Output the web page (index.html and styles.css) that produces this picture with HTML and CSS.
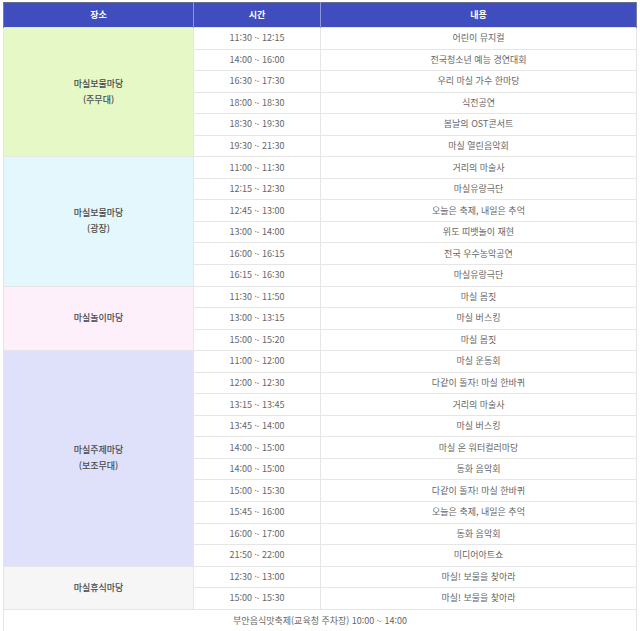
FILE: index.html
```html
<!DOCTYPE html>
<html lang="ko">
<head>
<meta charset="utf-8">
<link rel="stylesheet" href="styles.css">
</head>
<body>
<table class="sched">
  <colgroup><col class="c-place"><col class="c-time"><col class="c-desc"></colgroup>
  <thead>
    <tr><th>장소</th><th>시간</th><th>내용</th></tr>
  </thead>
  <tbody>
    <tr><td class="place green" rowspan="6">마실보물마당<br>(주무대)</td><td>11:30 ~ 12:15</td><td>어린이 뮤지컬</td></tr>
    <tr><td>14:00 ~ 16:00</td><td>전국청소년 예능 경연대회</td></tr>
    <tr><td>16:30 ~ 17:30</td><td>우리 마실 가수 한마당</td></tr>
    <tr><td>18:00 ~ 18:30</td><td>식전공연</td></tr>
    <tr><td>18:30 ~ 19:30</td><td>봄날의 OST콘서트</td></tr>
    <tr><td>19:30 ~ 21:30</td><td>마실 열린음악회</td></tr>

    <tr><td class="place cyan" rowspan="6">마실보물마당<br>(광장)</td><td>11:00 ~ 11:30</td><td>거리의 마술사</td></tr>
    <tr><td>12:15 ~ 12:30</td><td>마실유랑극단</td></tr>
    <tr><td>12:45 ~ 13:00</td><td>오늘은 축제, 내일은 추억</td></tr>
    <tr><td>13:00 ~ 14:00</td><td>위도 띠뱃놀이 재현</td></tr>
    <tr><td>16:00 ~ 16:15</td><td>전국 우수농악공연</td></tr>
    <tr><td>16:15 ~ 16:30</td><td>마실유랑극단</td></tr>

    <tr><td class="place pink" rowspan="3">마실놀이마당</td><td>11:30 ~ 11:50</td><td>마실 몸짓</td></tr>
    <tr><td>13:00 ~ 13:15</td><td>마실 버스킹</td></tr>
    <tr><td>15:00 ~ 15:20</td><td>마실 몸짓</td></tr>

    <tr><td class="place lav" rowspan="10">마실주제마당<br>(보조무대)</td><td>11:00 ~ 12:00</td><td>마실 운동회</td></tr>
    <tr><td>12:00 ~ 12:30</td><td>다같이 돌자! 마실 한바퀴</td></tr>
    <tr><td>13:15 ~ 13:45</td><td>거리의 마술사</td></tr>
    <tr><td>13:45 ~ 14:00</td><td>마실 버스킹</td></tr>
    <tr><td>14:00 ~ 15:00</td><td>마실 온 워터컬러마당</td></tr>
    <tr><td>14:00 ~ 15:00</td><td>동화 음악회</td></tr>
    <tr><td>15:00 ~ 15:30</td><td>다같이 돌자! 마실 한바퀴</td></tr>
    <tr><td>15:45 ~ 16:00</td><td>오늘은 축제, 내일은 추억</td></tr>
    <tr><td>16:00 ~ 17:00</td><td>동화 음악회</td></tr>
    <tr><td>21:50 ~ 22:00</td><td>미디어아트쇼</td></tr>

    <tr><td class="place grey" rowspan="2">마실휴식마당</td><td>12:30 ~ 13:00</td><td>마실! 보물을 찾아라</td></tr>
    <tr><td>15:00 ~ 15:30</td><td>마실! 보물을 찾아라</td></tr>

    <tr class="foot"><td colspan="3">부안음식맛축제(교육청 주차장) 10:00 ~ 14:00</td></tr>
  </tbody>
</table>
</body>
</html>
```

FILE: styles.css
```css
html, body {
  margin: 0;
  background: #fff;
}
body {
  padding: 2px 4px 0 3px;
  font-family: "Noto Sans CJK KR", "Noto Sans", sans-serif;
}
.sched {
  width: 633px;
  border-collapse: collapse;
  table-layout: fixed;
  font-size: 9px;
  color: #666;
}
.c-place { width: 190px; }
.c-time { width: 127px; }
.c-desc { width: 316px; }
.sched th {
  background: #3f4dbf;
  color: #fff;
  font-weight: 700;
  height: 24px;
  padding: 0;
  line-height: 12px;
  border: 1px solid #8d96d8;
  border-top: 1px solid #6a6f88;
  border-bottom: none;
}
.sched th:first-child { border-left-color: #7a7f98; }
.sched th:last-child { border-right-color: #7a7f98; }
.sched td {
  height: 20.55px;
  padding: 0;
  text-align: center;
  vertical-align: middle;
  border: 1px solid #e6e6e6;
  line-height: 12px;
}
.sched td.place {
  color: #4a4a4a;
  font-weight: 500;
  line-height: 16px;
}
.green { background: #e5f8c6; }
.cyan { background: #e3f7fc; }
.pink { background: #fdf0fb; }
.lav { background: #dfe1fb; }
.grey { background: #f6f6f6; }
.foot td { height: 22px; }
```
